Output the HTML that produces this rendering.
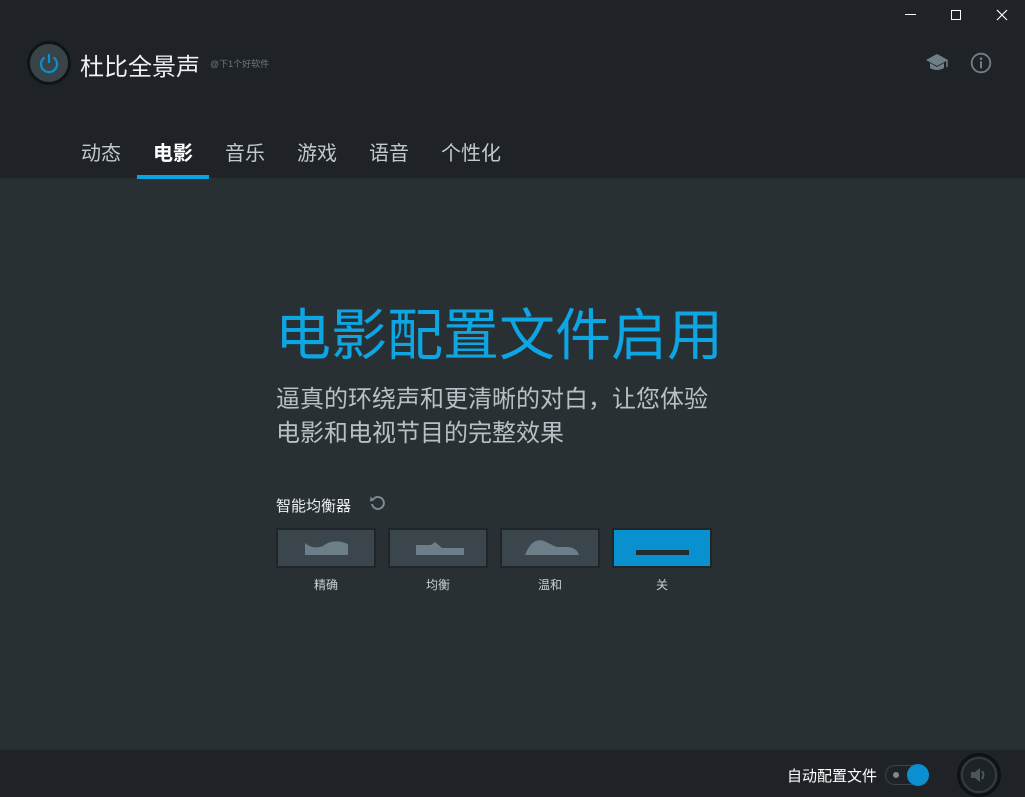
<!DOCTYPE html>
<html><head><meta charset="utf-8"><style>
*{margin:0;padding:0;box-sizing:border-box}
body{width:1025px;height:797px;overflow:hidden;background:#283034;font-family:"Liberation Sans","Noto Sans CJK SC",sans-serif;position:relative;color:#fff}
.hdr{position:absolute;left:0;top:0;width:1025px;height:178px;background:#1f2327}
.ftr{position:absolute;left:0;top:750px;width:1025px;height:47px;background:#1f2327}
.abs{position:absolute;white-space:nowrap}
.tab{position:absolute;top:137px;font-size:20px;color:#c2c9cc}
.eq{position:absolute;top:528px;width:100px;height:40px;background:#3b464c;border:2px solid #1f2528}
.lbl{position:absolute;top:576px;width:100px;text-align:center;font-size:12px;color:#c9d0d3}
</style></head><body>
<div class="hdr"></div>
<div class="ftr"></div>
<div class="abs" style="left:905px;top:14px;width:11px;height:1px;background:#fff"></div>
<div class="abs" style="left:951px;top:10px;width:10px;height:10px;border:1px solid #fff"></div>
<svg class="abs" style="left:996px;top:9px" width="12" height="12"><path d="M1 1L11 11M11 1L1 11" stroke="#fff" stroke-width="1.2"/></svg>
<div class="abs" style="left:27px;top:41px;width:44px;height:44px;border-radius:50%;background:#394448;border:3px solid #111416"></div>
<svg class="abs" style="left:36px;top:50px" width="26" height="26" viewBox="0 0 26 26"><path d="M8.5 7.5A8 8 0 1 0 17.5 7.5" fill="none" stroke="#0a8fd0" stroke-width="2.2"/><path d="M13 4V13" stroke="#0a8fd0" stroke-width="2.2"/></svg>
<div class="abs" style="left:80px;top:47px;font-size:24px;color:#eef1f2">杜比全景声</div>
<div class="abs" style="left:210px;top:57px;font-size:9px;color:#6f787c">@下1个好软件</div>
<svg class="abs" style="left:925px;top:52px" width="24" height="22" viewBox="0 0 24 22"><path d="M12 2L1 8L12 14L23 8Z" fill="#6e7f87"/><path d="M5 11V16Q12 20 19 16V11L12 15Z" fill="#6e7f87"/><path d="M22 8V15" stroke="#6e7f87" stroke-width="1.5"/></svg>
<svg class="abs" style="left:970px;top:52px" width="22" height="22" viewBox="0 0 22 22"><circle cx="11" cy="11" r="9.3" fill="none" stroke="#6e7f87" stroke-width="1.8"/><circle cx="11" cy="6.7" r="1.3" fill="#6e7f87"/><rect x="10" y="9.3" width="2" height="7" fill="#6e7f87"/></svg>
<div class="tab" style="left:81px">动态</div>
<div class="tab" style="left:153px;color:#fff;font-weight:bold">电影</div>
<div class="tab" style="left:225px">音乐</div>
<div class="tab" style="left:297px">游戏</div>
<div class="tab" style="left:369px">语音</div>
<div class="tab" style="left:441px">个性化</div>
<div class="abs" style="left:137px;top:175px;width:72px;height:4px;background:#0aa3e4"></div>
<div class="abs" style="left:275px;top:291px;font-size:56px;color:#0ea5e3">电影配置文件启用</div>
<div class="abs" style="left:276px;top:383px;font-size:24px;line-height:34px;color:#b7c0c4">逼真的环绕声和更清晰的对白，让您体验<br>电影和电视节目的完整效果</div>
<div class="abs" style="left:276px;top:495px;font-size:15px;color:#eef1f2">智能均衡器</div>
<svg class="abs" style="left:369px;top:494px" width="18" height="18" viewBox="0 0 18 18"><path d="M4 5.5A6 6 0 1 1 3 10" fill="none" stroke="#7d8a90" stroke-width="2"/><path d="M1.5 2.5L5 6.5L1 7.5Z" fill="#7d8a90"/></svg>
<div class="eq" style="left:276px"><svg width="96" height="36"><path d="M27 13Q35 20 45 16Q55 8 70 14V25H27Z" fill="#6c7f88"/></svg></div>
<div class="eq" style="left:388px"><svg width="96" height="36"><path d="M26 15H41L45 12L52 18H74V25H26Z" fill="#6c7f88"/></svg></div>
<div class="eq" style="left:500px"><svg width="96" height="36"><path d="M23 25Q30 7 42 11Q50 15 55 17H66Q75 18 77 25Z" fill="#6c7f88"/></svg></div>
<div class="eq" style="left:612px;background:#0890cf"><div style="position:absolute;left:22px;top:20px;width:53px;height:5px;background:#222b30"></div></div>
<div class="lbl" style="left:276px">精确</div>
<div class="lbl" style="left:388px">均衡</div>
<div class="lbl" style="left:500px">温和</div>
<div class="lbl" style="left:612px">关</div>
<div class="abs" style="left:787px;top:765px;font-size:15px;color:#fff">自动配置文件</div>
<div class="abs" style="left:885px;top:765px;width:44px;height:20px;border-radius:10px;border:1px solid #3a4448"></div>
<div class="abs" style="left:893px;top:772px;width:6px;height:6px;border-radius:50%;background:#7d8a90"></div>
<div class="abs" style="left:907px;top:764px;width:22px;height:22px;border-radius:50%;background:#0a90cf"></div>
<div class="abs" style="left:957px;top:753px;width:44px;height:44px;border-radius:50%;background:#1d2225;border:3px solid #0f1214"></div>
<div class="abs" style="left:961px;top:757px;width:36px;height:36px;border-radius:50%;border:2px solid #333c40"></div>
<svg class="abs" style="left:968px;top:764px" width="22" height="22" viewBox="0 0 22 22"><path d="M3 8H7L12 4V18L7 14H3Z" fill="#4b565b"/><path d="M14 7Q17 11 14 15" fill="none" stroke="#4b565b" stroke-width="2"/></svg>
</body></html>
